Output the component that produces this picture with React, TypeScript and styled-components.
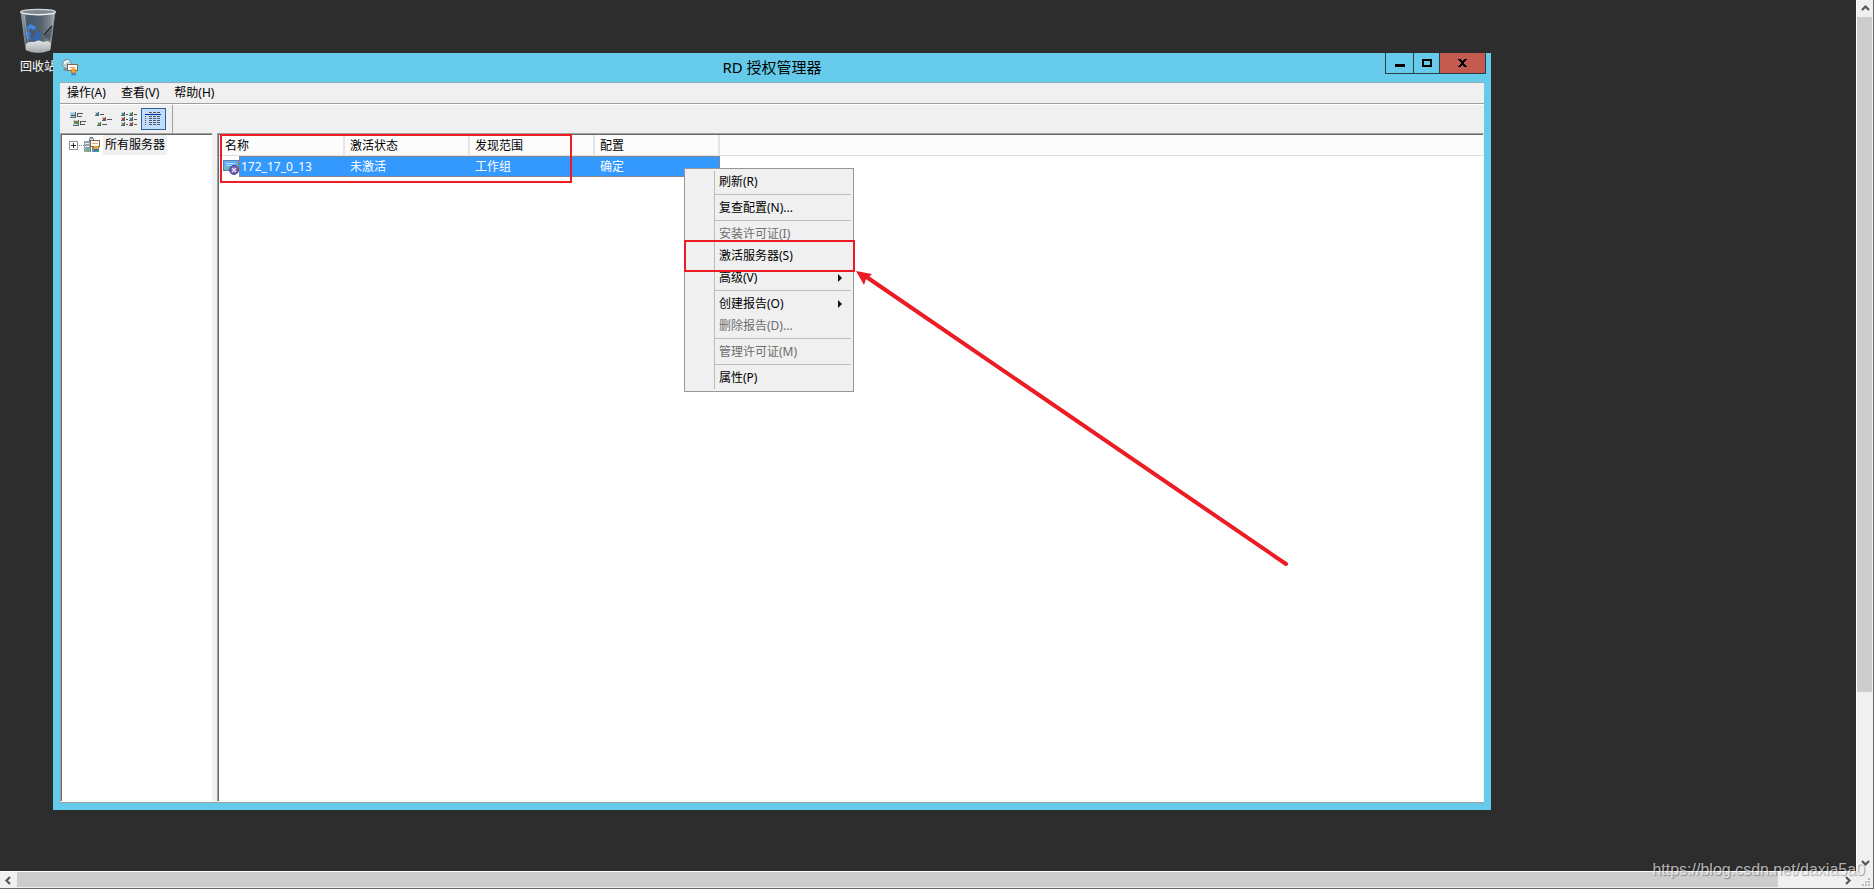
import React from "react";
import styled, { createGlobalStyle, css } from "styled-components";

const GlobalStyle = createGlobalStyle`
  *, *::before, *::after { box-sizing: border-box; }
  body {
    margin: 0;
    background: #2d2d2d;
    color: #000;
    font: 12px/18px "Noto Sans", "Noto Sans CJK SC", sans-serif;
  }
  button {
    font: inherit;
    color: inherit;
    border: 0;
    padding: 0;
    margin: 0;
    background: none;
  }
`;

const RED = "#ed1c24";

const Screen = styled.div`
  position: relative;
  display: grid;
  grid-template-columns: minmax(0, 1fr) 18px;
  grid-template-rows: minmax(0, 1fr) 18px;
  height: 100vh;
  min-height: 480px;
  overflow: hidden;
`;

const Desktop = styled.main`
  position: relative;
  overflow: hidden;
  background: #2d2d2d;
`;

const Shortcut = styled.button`
  position: absolute;
  top: 8px;
  left: 8px;
  width: 60px;
  display: flex;
  flex-direction: column;
  align-items: center;
  gap: 4px;
  color: #fff;
`;

const Window = styled.section`
  position: absolute;
  inset: 53px 365px 61px 53px;
  display: flex;
  flex-direction: column;
  padding: 0 7px 7px;
  background: #66cbea;
`;

const TitleBar = styled.header`
  display: grid;
  grid-template-columns: 101px 1fr 101px;
  flex: none;
  height: 29px;
`;

const AppIconSlot = styled.span`
  padding: 6px 0 0 2px;
`;

const Title = styled.h1`
  margin: 0;
  font-size: 15px;
  font-weight: 400;
  line-height: 28px;
  text-align: center;
`;

const Caption = styled.div`
  display: flex;
  height: 21px;
  width: 101px;
  justify-self: end;
  margin-right: -2px;
`;

const CaptionButton = styled.button<{ $w: number; $close?: boolean }>`
  display: flex;
  align-items: center;
  justify-content: center;
  width: ${(p) => p.$w}px;
  border: solid #2a3c44;
  border-width: 0 ${(p) => (p.$close ? "1px" : "0")} 1px 1px;
  background: ${(p) => (p.$close ? "#c35a50" : "transparent")};
`;

const MenuBar = styled.nav`
  display: flex;
  flex: none;
  gap: 15px;
  height: 22px;
  padding-left: 7px;
  background: #f0f0f0;
  border-top: 1px solid #8fabb5;
  border-bottom: 1px solid #a0a0a0;
`;

const ToolBar = styled.div`
  display: flex;
  flex: none;
  height: 29px;
  background: #f0f0f0;
  border-top: 1px solid #fff;
`;

const ToolGroup = styled.div`
  display: flex;
  align-items: center;
  padding: 0 6px;
  border-right: 1px solid #a0a0a0;
`;

const ToolButton = styled.button<{ $active?: boolean }>`
  display: flex;
  align-items: center;
  justify-content: center;
  width: 25px;
  height: 22px;
  ${(p) =>
    p.$active &&
    css`
      background: #c2dcff;
      border: 1px solid #2a6498;
    `}
`;

const Panes = styled.div`
  display: grid;
  grid-template-columns: 153px minmax(0, 1fr);
  gap: 4px;
  flex: 1;
  min-height: 0;
  background: #f0f0f0;
  border-bottom: 1px solid #a0a0a0;
`;

const Pane = styled.div`
  min-width: 0;
  background: #fff;
  border: solid;
  border-width: 1px;
  border-color: #a0a0a0 #f0f0f0 #fff #a0a0a0;
  box-shadow: inset 1px 1px #696969;
`;

const TreeItem = styled.div`
  display: flex;
  align-items: center;
  height: 20px;
  margin: 1px 0 0 8px;
`;

const TreeLabel = styled.button`
  height: 20px;
  margin-left: 2px;
  padding: 0 2px;
  background: #f0f0f0;
`;

const ListPane = styled(Pane)`
  padding: 1px 0 0 1px;
`;

const Grid = styled.table`
  width: 100%;
  table-layout: fixed;
  border-collapse: separate;
  border-spacing: 0;
`;

const Col = styled.col<{ $w?: number }>`
  width: ${(p) => (p.$w ? `${p.$w}px` : "auto")};
`;

const Head = styled.th<{ $first?: boolean }>`
  height: 21px;
  padding: 2px 0 0 ${(p) => (p.$first ? 6 : 5)}px;
  font-weight: 400;
  text-align: left;
  background: #fcfcfc;
  border-right: 2px solid #e5e5e5;
  border-bottom: 1px solid #e0e0e0;
`;

const HeadRest = styled.td`
  padding: 0;
  background: #fcfcfc;
  border-bottom: 1px solid #e0e0e0;
`;

const Cell = styled.td<{ $last?: boolean }>`
  height: 21px;
  padding: 0 0 0 5px;
  color: #fff;
  background: #3399ff;
  border: dotted #cc7a30;
  border-width: 1px ${(p) => (p.$last ? "1px" : "0")} 1px 0;
`;

const NameCell = styled.td`
  padding: 0;
`;

const NameBox = styled.div`
  display: flex;
  align-items: center;
  height: 21px;
  padding-left: 4px;
`;

const Name = styled.span`
  flex: 1;
  height: 21px;
  padding-left: 1px;
  line-height: 19px;
  color: #fff;
  background: #3399ff;
  border: 1px dotted #cc7a30;
  border-right: 0;
`;

const Menu = styled.div`
  position: absolute;
  top: 168px;
  left: 684px;
  width: 170px;
  padding: 2px;
  background: linear-gradient(#bdbdbd, #bdbdbd) 29px 2px / 1px calc(100% - 4px) no-repeat #f0f0f0;
  border: 1px solid #979797;
`;

const MenuItem = styled.button`
  display: flex;
  align-items: center;
  justify-content: space-between;
  width: 100%;
  height: 22px;
  padding: 0 9px 0 32px;
  &:disabled { color: #6d6d6d; }
`;

const Separator = styled.hr`
  height: 1px;
  margin: 1px 0 2px 28px;
  border: 0;
  background: #bdbdbd;
`;

const Mark = styled.div<{ $x: number; $y: number; $w: number; $h: number }>`
  position: absolute;
  left: ${(p) => p.$x}px;
  top: ${(p) => p.$y}px;
  width: ${(p) => p.$w}px;
  height: ${(p) => p.$h}px;
  border: 2px solid ${RED};
  pointer-events: none;
`;

const Arrow = styled.svg`
  position: absolute;
  left: 850px;
  top: 264px;
  pointer-events: none;
`;

const Bar = styled.div<{ $vertical?: boolean }>`
  display: flex;
  flex-direction: ${(p) => (p.$vertical ? "column" : "row")};
  background: #f0f0f0;
  border: solid;
  border-color: ${(p) => (p.$vertical ? "#fff #666 #fff #fff" : "#fff #fff #666 #fff")};
  border-width: ${(p) => (p.$vertical ? "0 1px 0 1px" : "1px 0 1px 0")};
`;

const BarButton = styled.button`
  display: flex;
  align-items: center;
  justify-content: center;
  flex: 0 0 17px;
`;

const Thumb = styled.div<{ $grow: number; $vertical?: boolean }>`
  flex: ${(p) => p.$grow} 1 0;
  background: #cdcdcd;
  margin: ${(p) => (p.$vertical ? "0 1px 0 0" : "0 0 1px 0")};
`;

const Track = styled.div<{ $grow: number }>`
  flex: ${(p) => p.$grow} 1 0;
`;

const Corner = styled.div`
  display: flex;
  align-items: flex-end;
  justify-content: flex-end;
  padding: 0 3px 2px 0;
  background: #f0f0f0;
  border: solid #666;
  border-width: 0 1px 1px 0;
`;

const Watermark = styled.a`
  position: absolute;
  right: 9px;
  bottom: 8px;
  font: 16px/22px "Liberation Sans", sans-serif;
  color: rgba(255, 255, 255, 0.65);
  text-shadow: 1px 1px 1px rgba(0, 0, 0, 0.35);
  text-decoration: none;
`;

const BinIcon = () => (
  <svg width="38" height="46" viewBox="0 0 38 46" aria-hidden="true">
    <defs>
      <linearGradient id="glass" x1="0" x2="1">
        <stop offset="0" stopColor="#a9b4bb" />
        <stop offset=".18" stopColor="#43566a" />
        <stop offset=".6" stopColor="#55626f" />
        <stop offset=".85" stopColor="#7d878e" />
        <stop offset="1" stopColor="#b3babe" />
      </linearGradient>
      <linearGradient id="base" x1="0" y1="0" x2="0" y2="1">
        <stop offset="0" stopColor="#e4e6e7" />
        <stop offset="1" stopColor="#a2a6a8" />
      </linearGradient>
    </defs>
    <path d="M2 4 L7 42 Q19 47 31 42 L36 4 Z" fill="url(#glass)" stroke="#8f999f" strokeWidth=".8" />
    <path d="M7 36 Q10 33 15 34 Q20 31 24 34 Q29 32 32 35 L31 42 Q19 47 7 42 Z" fill="url(#base)" />
    <path d="M34 19 L25 29 L31 32 L32 27 Z" fill="#27313a" opacity=".45" />
    <path d="M33 18 L25 27" stroke="#222b33" strokeWidth="1.600" />
    <path d="M8 19 L11 16 L16 18 L17 21 L13 22 L12 20 L9 23 Z" fill="#3f86de" />
    <path d="M16 24 L19 23 L22 27 L19 32 L15 33 L14 29 L18 28 Z" fill="#2b67c4" />
    <path d="M6.500 24 L10 23 L12 26 L11 29 L13 32 L9 31 Z" fill="#3878d4" />
    <path d="M5 7 L10 40" stroke="#dce2e5" opacity=".45" />
    <ellipse cx="19" cy="4" rx="17.500" ry="2.600" fill="#7f8a91" stroke="#d5d9db" strokeWidth="1.200" />
    <path d="M3 5 Q19 9 35 5" fill="none" stroke="#fff" opacity=".7" />
  </svg>
);

const AppIcon = () => (
  <svg width="17" height="17" viewBox="0 0 17 17" aria-hidden="true">
    <path d="M3 8 L1 11 L4 12 L8 12 L8 8" fill="#7f8c94" />
    <circle cx="5" cy="5" r="4.500" fill="#b9d3de" stroke="#7c909b" />
    <path d="M2.500 5 Q3 2 7 2" stroke="#fff" fill="none" strokeWidth="1.500" />
    <rect x="5.500" y="5.500" width="10" height="6" fill="#fffaf2" stroke="#7b6a5b" />
    <path d="M8 8.500 h5" stroke="#d7a08a" />
    <path d="M9.500 12 L9.500 17 L11.500 15.500 L13.500 17 L13.500 12 Z" fill="#2c7fd0" />
    <circle cx="11.500" cy="12" r="2.300" fill="#f5a81c" stroke="#b8700a" strokeWidth=".6" />
  </svg>
);

const ServersIcon = () => (
  <svg width="17" height="17" viewBox="0 0 17 17" shapeRendering="crispEdges" aria-hidden="true">
    <path d="M5 1 h5 v4 h-5z M0 4 h7 v11 h-7z" fill="#93a3aa" />
    <path d="M6 0 h3 v1 h-3z M5 2 h1 v3 h-1z M6 5 h1 v10 h-1z" fill="#6f8088" />
    <path d="M1 6 h4 v1 h-4z M1 9 h4 v1 h-4z M6 2 h3 v1 h-3z" fill="#e4edf0" />
    <path d="M8 8 h7 v7 h-7z" fill="#7d8d95" />
    <path d="M3 12 h2 v2 h-2z M12 13 h3 v2 h-3z" fill="#33d12d" />
    <rect x="6.500" y="3.500" width="9" height="6" fill="#fff7ea" stroke="#806a56" />
    <path d="M8 6 h6 v1 h-6z" fill="#d8a690" />
    <path d="M10 11 h4 v4 h-1 v-1 h-2 v1 h-1z" fill="#2878c8" />
    <path d="M10 9 h4 v3 h-4z" fill="#f0a41c" />
  </svg>
);

const HostIcon = () => (
  <svg width="16" height="16" viewBox="0 0 16 16" aria-hidden="true">
    <rect x=".5" y="1.500" width="15" height="10" fill="#62aef0" stroke="#5b83ad" />
    <path d="M3 4.500 h9 M3 6.500 h6" stroke="#aee0ff" />
    <path d="M2 8 h2 v2 h-2z" fill="#7bdc38" />
    <circle cx="11" cy="11" r="4.500" fill="#6d5cad" stroke="#59488f" />
    <path d="M9 9 L13 13 M13 9 L9 13" stroke="#e5e0fa" strokeWidth="1.500" />
  </svg>
);

const Glyph = ({ children }: { children: React.ReactNode }) => (
  <svg width="17" height="17" viewBox="0 0 17 17" shapeRendering="crispEdges" aria-hidden="true">
    {children}
  </svg>
);

const LargeIcons = () => (
  <Glyph>
    <path d="M0 1h6v6h-6z M3 9h6v6h-6z" fill="#5c666d" />
    <path d="M0 1h5v5h-5z M3 9h5v5h-5z" fill="#c9d2d7" />
    <path d="M1 2h4v3h-4z" fill="#7ed5df" />
    <path d="M1 4h4v1h-4z" fill="#1c4d74" />
    <path d="M4 10h4v3h-4z" fill="#3bb44a" />
    <path d="M4 10h2v1h-2z M6 11h2v1h-2z" fill="#c43a33" />
    <path d="M7 2h6v1h-6z M7 5h5v1h-5z M10 10h6v1h-6z M10 13h5v1h-5z M7 3h1v2h-1z M10 11h1v2h-1z" fill="#555" />
  </Glyph>
);

const Bullet = ({ x, y, c }: { x: number; y: number; c: string }) => (
  <>
    <path d={`M${x} ${y}h4v4h-4z`} fill="#59636a" />
    <path d={`M${x} ${y}h3v3h-3z`} fill="#cfd6da" />
    <path d={`M${x + 1} ${y + 1}h2v2h-2z`} fill={c} />
  </>
);

const SmallIcons = () => (
  <Glyph>
    <Bullet x={0} y={1} c="#2f8f9b" />
    <Bullet x={7} y={6} c="#c5362c" />
    <Bullet x={2} y={11} c="#6b9c2f" />
    <path d="M5 3h4v1h-4z M12 8h5v1h-5z M7 13h5v1h-5z" fill="#555" />
  </Glyph>
);

const ListIcon = () => (
  <Glyph>
    <Bullet x={1} y={1} c="#2f8f9b" />
    <Bullet x={1} y={6} c="#c5362c" />
    <Bullet x={1} y={11} c="#6b9c2f" />
    <Bullet x={9} y={1} c="#4d9c3b" />
    <Bullet x={9} y={6} c="#2f8f9b" />
    <Bullet x={9} y={11} c="#c5362c" />
    <path d="M6 3h2v1h-2z M6 8h2v1h-2z M6 13h2v1h-2z M14 3h3v1h-3z M14 8h3v1h-3z M14 13h3v1h-3z" fill="#555" />
  </Glyph>
);

const DetailsIcon = () => (
  <Glyph>
    <path d="M4 1h3v1h-3z M8 1h3v1h-3z M12 1h3v1h-3z" fill="#555" />
    <path d="M0 3h16v1h-16z" fill="#0b2f9e" />
    {[5, 7, 9, 11, 13].map((y) => (
      <path key={y} d={`M0 ${y}h1v1h-1z M4 ${y}h3v1h-3z M8 ${y}h3v1h-3z M12 ${y}h3v1h-3z`} fill="#4f5a66" />
    ))}
  </Glyph>
);

const Expander = () => (
  <svg width="15" height="9" viewBox="0 0 15 9" shapeRendering="crispEdges" aria-hidden="true">
    <path d="M0 0h9v9h-9z" fill="#919191" />
    <path d="M1 1h7v7h-7z" fill="#fff" />
    <path d="M2 4h5v1h-5z M4 2h1v5h-1z" fill="#222" />
    <path d="M10 4h1v1h-1z M12 4h1v1h-1z M14 4h1v1h-1z" fill="#888" />
  </svg>
);

const turns = { up: 0, right: 90, down: 180, left: 270 };

const Chevron = ({ to }: { to: keyof typeof turns }) => (
  <svg width="9" height="9" viewBox="0 0 9 9" aria-hidden="true">
    <path
      d="M1 6 L4.500 2.500 L8 6"
      fill="none"
      stroke="#555"
      strokeWidth="2.200"
      transform={`rotate(${turns[to]} 4.500 4.500)`}
    />
  </svg>
);

type Entry = { label: string; off?: boolean; sub?: boolean };

const groups: Entry[][] = [
  [{ label: "刷新(R)" }],
  [{ label: "复查配置(N)..." }],
  [{ label: "安装许可证(I)", off: true }, { label: "激活服务器(S)" }, { label: "高级(V)", sub: true }],
  [{ label: "创建报告(O)", sub: true }, { label: "删除报告(D)...", off: true }],
  [{ label: "管理许可证(M)", off: true }],
  [{ label: "属性(P)" }],
];

export default function App() {
  return (
    <Screen>
      <GlobalStyle />
      <Desktop>
        <Shortcut>
          <BinIcon />
          回收站
        </Shortcut>

        <Window>
          <TitleBar>
            <AppIconSlot>
              <AppIcon />
            </AppIconSlot>
            <Title>RD 授权管理器</Title>
            <Caption>
              <CaptionButton $w={28} aria-label="最小化">
                <svg width="10" height="10" shapeRendering="crispEdges">
                  <path d="M0 6h10v3h-10z" />
                </svg>
              </CaptionButton>
              <CaptionButton $w={26} aria-label="最大化">
                <svg width="10" height="8" shapeRendering="crispEdges">
                  <path d="M0 0h10v8h-10z M2 2v4h6v-4z" fillRule="evenodd" />
                </svg>
              </CaptionButton>
              <CaptionButton $w={47} $close aria-label="关闭">
                <svg width="9" height="8" shapeRendering="crispEdges">
                  <path d="M0 0h3v1h1v1h1v-1h1v-1h3v1h-1v1h-1v1h-1v2h1v1h1v1h1v1h-3v-1h-1v-1h-1v1h-1v1h-3v-1h1v-1h1v-1h1v-2h-1v-1h-1v-1h-1z" />
                </svg>
              </CaptionButton>
            </Caption>
          </TitleBar>

          <MenuBar>
            <button>操作(A)</button>
            <button>查看(V)</button>
            <button>帮助(H)</button>
          </MenuBar>

          <ToolBar>
            <ToolGroup>
              <ToolButton aria-label="大图标"><LargeIcons /></ToolButton>
              <ToolButton aria-label="小图标"><SmallIcons /></ToolButton>
              <ToolButton aria-label="列表"><ListIcon /></ToolButton>
              <ToolButton $active aria-label="详细信息"><DetailsIcon /></ToolButton>
            </ToolGroup>
          </ToolBar>

          <Panes>
            <Pane>
              <TreeItem>
                <Expander />
                <ServersIcon />
                <TreeLabel>所有服务器</TreeLabel>
              </TreeItem>
            </Pane>
            <ListPane>
              <Grid>
                <colgroup>
                  <Col $w={126} />
                  <Col $w={125} />
                  <Col $w={125} />
                  <Col $w={125} />
                  <Col />
                </colgroup>
                <thead>
                  <tr>
                    <Head $first>名称</Head>
                    <Head>激活状态</Head>
                    <Head>发现范围</Head>
                    <Head>配置</Head>
                    <HeadRest />
                  </tr>
                </thead>
                <tbody>
                  <tr>
                    <NameCell>
                      <NameBox>
                        <HostIcon />
                        <Name>172_17_0_13</Name>
                      </NameBox>
                    </NameCell>
                    <Cell>未激活</Cell>
                    <Cell>工作组</Cell>
                    <Cell $last>确定</Cell>
                  </tr>
                </tbody>
              </Grid>
            </ListPane>
          </Panes>
        </Window>

        <Menu>
          {groups.map((group, i) => (
            <React.Fragment key={i}>
              {i > 0 && <Separator />}
              {group.map((item) => (
                <MenuItem key={item.label} disabled={item.off}>
                  {item.label}
                  {item.sub && (
                    <svg width="4" height="8" aria-hidden="true">
                      <path d="M0 0 L4 4 L0 8 Z" fill="#111" />
                    </svg>
                  )}
                </MenuItem>
              ))}
            </React.Fragment>
          ))}
        </Menu>

        <Mark $x={220} $y={134} $w={352} $h={49} />
        <Mark $x={684} $y={240} $w={171} $h={32} />
        <Arrow width="445" height="308" aria-hidden="true">
          <path d="M18 14 L436 300" stroke={RED} strokeWidth="4" strokeLinecap="round" />
          <path d="M6 7 L22 10 L18 14 L16 15 L14 21 Z" fill={RED} />
        </Arrow>
      </Desktop>

      <Bar $vertical>
        <BarButton aria-label="向上滚动"><Chevron to="up" /></BarButton>
        <Thumb $vertical $grow={675} />
        <Track $grow={162} />
        <BarButton aria-label="向下滚动"><Chevron to="down" /></BarButton>
      </Bar>
      <Bar>
        <BarButton aria-label="向左滚动"><Chevron to="left" /></BarButton>
        <Thumb $grow={1761} />
        <Track $grow={61} />
        <BarButton aria-label="向右滚动"><Chevron to="right" /></BarButton>
      </Bar>
      <Corner>
        <svg width="8" height="8" shapeRendering="crispEdges" aria-hidden="true">
          <path
            d="M6 0h2v2h-2z M3 3h2v2h-2z M6 3h2v2h-2z M0 6h2v2h-2z M3 6h2v2h-2z M6 6h2v2h-2z"
            fill="#bcbcbc"
          />
        </svg>
      </Corner>

      <Watermark href="https://blog.csdn.net/daxia5a0">https://blog.csdn.net/daxia5a0</Watermark>
    </Screen>
  );
}
